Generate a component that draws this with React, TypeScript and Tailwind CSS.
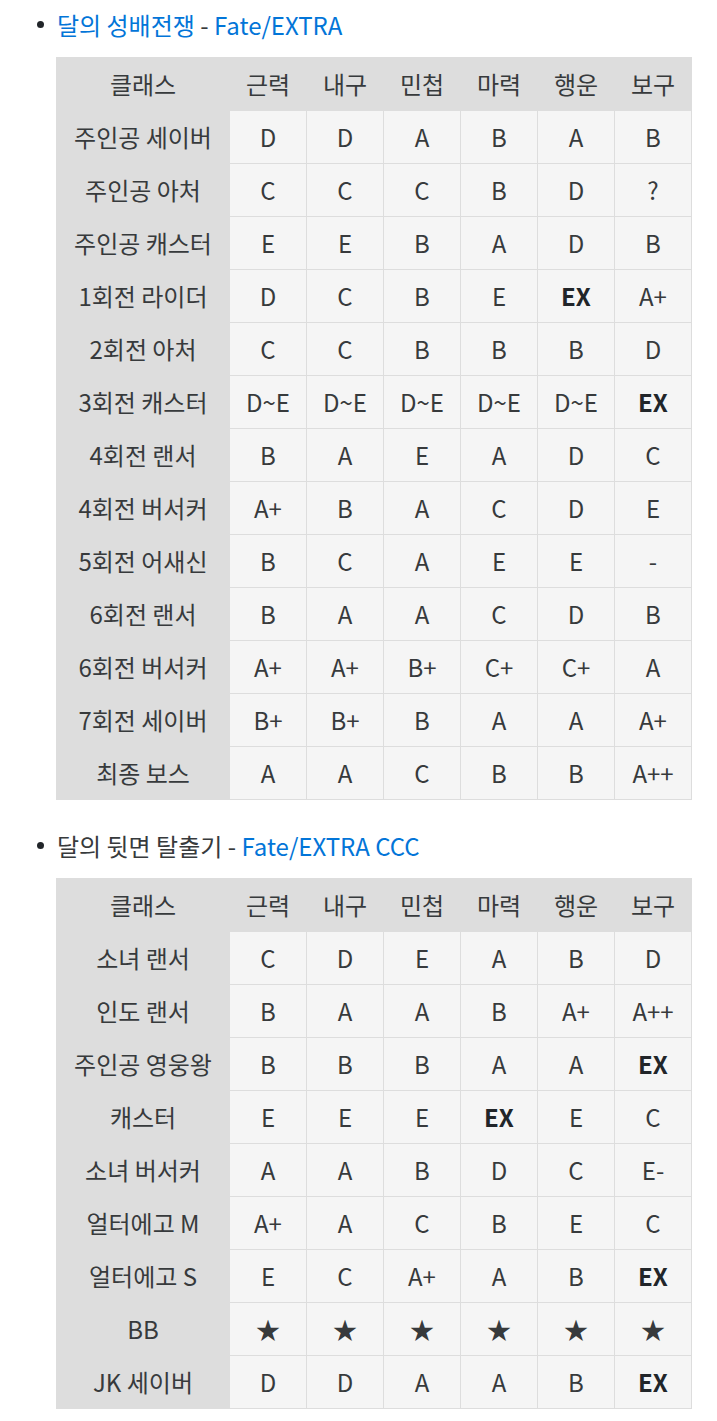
import React from "react";

type Row = { name: string; stats: string[] };

const STATS = ["근력", "내구", "민첩", "마력", "행운", "보구"];

const extraRows: Row[] = [
  { name: "주인공 세이버", stats: ["D", "D", "A", "B", "A", "B"] },
  { name: "주인공 아처", stats: ["C", "C", "C", "B", "D", "?"] },
  { name: "주인공 캐스터", stats: ["E", "E", "B", "A", "D", "B"] },
  { name: "1회전 라이더", stats: ["D", "C", "B", "E", "*EX", "A+"] },
  { name: "2회전 아처", stats: ["C", "C", "B", "B", "B", "D"] },
  { name: "3회전 캐스터", stats: ["D~E", "D~E", "D~E", "D~E", "D~E", "*EX"] },
  { name: "4회전 랜서", stats: ["B", "A", "E", "A", "D", "C"] },
  { name: "4회전 버서커", stats: ["A+", "B", "A", "C", "D", "E"] },
  { name: "5회전 어새신", stats: ["B", "C", "A", "E", "E", "-"] },
  { name: "6회전 랜서", stats: ["B", "A", "A", "C", "D", "B"] },
  { name: "6회전 버서커", stats: ["A+", "A+", "B+", "C+", "C+", "A"] },
  { name: "7회전 세이버", stats: ["B+", "B+", "B", "A", "A", "A+"] },
  { name: "최종 보스", stats: ["A", "A", "C", "B", "B", "A++"] },
];

const cccRows: Row[] = [
  { name: "소녀 랜서", stats: ["C", "D", "E", "A", "B", "D"] },
  { name: "인도 랜서", stats: ["B", "A", "A", "B", "A+", "A++"] },
  { name: "주인공 영웅왕", stats: ["B", "B", "B", "A", "A", "*EX"] },
  { name: "캐스터", stats: ["E", "E", "E", "*EX", "E", "C"] },
  { name: "소녀 버서커", stats: ["A", "A", "B", "D", "C", "E-"] },
  { name: "얼터에고 M", stats: ["A+", "A", "C", "B", "E", "C"] },
  { name: "얼터에고 S", stats: ["E", "C", "A+", "A", "B", "*EX"] },
  { name: "BB", stats: ["★", "★", "★", "★", "★", "★"] },
  { name: "JK 세이버", stats: ["D", "D", "A", "A", "B", "*EX"] },
];

const StatTable = ({ rows }: { rows: Row[] }) => {
  return (
    <table className="table-fixed border-collapse w-[636px] text-[24px] leading-[30px] text-[#373a3c]">
      <colgroup>
        <col className="w-[173px]" />
        {STATS.map((s) => (
          <col key={s} />
        ))}
      </colgroup>
      <thead>
        <tr>
          <th className="h-[53px] p-0 font-normal bg-[#dddddd] border border-[#dddddd]">클래스</th>
          {STATS.map((s) => (
            <th key={s} className="h-[53px] p-0 font-normal bg-[#dddddd] border border-[#dddddd]">
              {s}
            </th>
          ))}
        </tr>
      </thead>
      <tbody>
        {rows.map((row) => (
          <tr key={row.name}>
            <td className="h-[53px] p-0 text-center bg-[#dddddd] border border-[#dddddd]">{row.name}</td>
            {row.stats.map((v, i) => (
              <td key={i} className="h-[53px] p-0 text-center bg-[#f5f5f5] border border-[#dddddd]">
                {v.startsWith("*") ? (
                  <b className="font-bold text-[#212529]">{v.slice(1)}</b>
                ) : (
                  v
                )}
              </td>
            ))}
          </tr>
        ))}
      </tbody>
    </table>
  );
};

export default function App() {
  return (
    <div
      className="bg-white min-h-screen pt-[8px] text-[#373a3c]"
      style={{ fontFamily: '"Noto Sans CJK KR", "Noto Sans", sans-serif' }}
    >
      <ul>
        {/* Fate/EXTRA */}
        <li className="pl-[57px]">
          <div className="relative h-[33px] leading-[33px] text-[24px]">
            <span className="absolute left-[-20px] top-[13px] w-[7px] h-[7px] rounded-full bg-[#212529]" />
            <a className="text-[#0275d8]">달의 성배전쟁</a> - <a className="text-[#0275d8]">Fate/EXTRA</a>
          </div>
          <div className="mt-[16px] ml-[-1px]">
            <StatTable rows={extraRows} />
          </div>
        </li>

        {/* Fate/EXTRA CCC */}
        <li className="pl-[57px] mt-[29px]">
          <div className="relative h-[33px] leading-[33px] text-[24px]">
            <span className="absolute left-[-20px] top-[13px] w-[7px] h-[7px] rounded-full bg-[#212529]" />
            달의 뒷면 탈출기 - <a className="text-[#0275d8]">Fate/EXTRA CCC</a>
          </div>
          <div className="mt-[16px] ml-[-1px]">
            <StatTable rows={cccRows} />
          </div>
        </li>
      </ul>
    </div>
  );
}
